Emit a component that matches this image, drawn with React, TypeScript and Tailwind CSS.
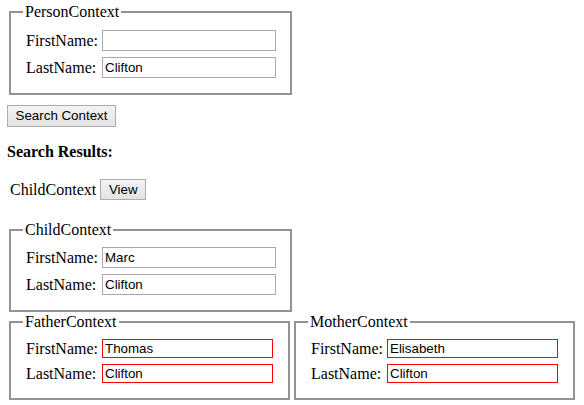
type TField = {
  label: string,
  value: string
}

type TProps = {
  title: string,
  fields: TField[],
  width: string,
  invalid?: boolean,
  top?: string
}

const ContextBox = (props: TProps) => {
  const { title, fields, width, invalid, top } = props

  return (
    <fieldset className={`${width} mx-[2px] border-2 border-[#939393] pl-[12px] ${top ?? 'pt-[8px]'} pb-[15px]`}>
      <legend className="px-[2px] text-[16px] leading-[18px]">{title}</legend>

      <div className="ml-[3px] grid grid-cols-[76px_auto] items-center gap-y-[6px]">
        {fields.map((f) => (
          <div className="contents" key={f.label}>
            <label className="text-[16px] leading-[18px]">{f.label}</label>
            <input
              type="text"
              defaultValue={f.value}
              className={invalid
                ? 'w-[171px] h-[19px] border border-[#ff0000] px-[2px] font-["Liberation_Sans",Arial,sans-serif] text-[13.33px] text-black outline-none'
                : 'w-[174px] h-[21px] border border-[#a9a9a9] px-[2px] font-["Liberation_Sans",Arial,sans-serif] text-[13.33px] text-black outline-none'
              }
            />
          </div>
        ))}
      </div>
    </fieldset>
  )
}

const Btn = ({ children, className }: { children: React.ReactNode, className: string }) => (
  <button
    className={`${className} border border-[#adadad] bg-linear-to-b from-[#f3f3f3] to-[#e3e3e3] font-["Liberation_Sans",Arial,sans-serif] text-[13.33px] text-black leading-none`}
  >
    {children}
  </button>
)

export default function App() {
  return (
    <div className='w-[584px] h-[405px] bg-white pl-[7px] pt-[3px] font-["Liberation_Serif","Times_New_Roman",serif] text-black flex flex-col items-start'>
      <ContextBox
        title="PersonContext"
        width="w-[283px]"
        top="pt-[9px]"
        fields={[
          { label: 'FirstName:', value: '' },
          { label: 'LastName:', value: 'Clifton' }
        ]}
      />

      <Btn className="mt-[10px] h-[22px] w-[109px]">Search Context</Btn>

      <div className="mt-[16px] text-[16px] leading-[18px] font-bold">Search Results:</div>

      <div className="mt-[18px] pl-[3px] flex flex-row items-center gap-[4px]">
        <span className="text-[16px] leading-[18px]">ChildContext</span>
        <Btn className="h-[21px] w-[46px]">View</Btn>
      </div>

      <div className="mt-[21px]">
        <ContextBox
          title="ChildContext"
          width="w-[283px]"
          fields={[
            { label: 'FirstName:', value: 'Marc' },
            { label: 'LastName:', value: 'Clifton' }
          ]}
        />
      </div>

      <div className="mt-[1px] flex flex-row">
        <ContextBox
          title="FatherContext"
          width="w-[281px]"
          invalid
          fields={[
            { label: 'FirstName:', value: 'Thomas' },
            { label: 'LastName:', value: 'Clifton' }
          ]}
        />
        <ContextBox
          title="MotherContext"
          width="w-[281px]"
          invalid
          fields={[
            { label: 'FirstName:', value: 'Elisabeth' },
            { label: 'LastName:', value: 'Clifton' }
          ]}
        />
      </div>
    </div>
  )
}
